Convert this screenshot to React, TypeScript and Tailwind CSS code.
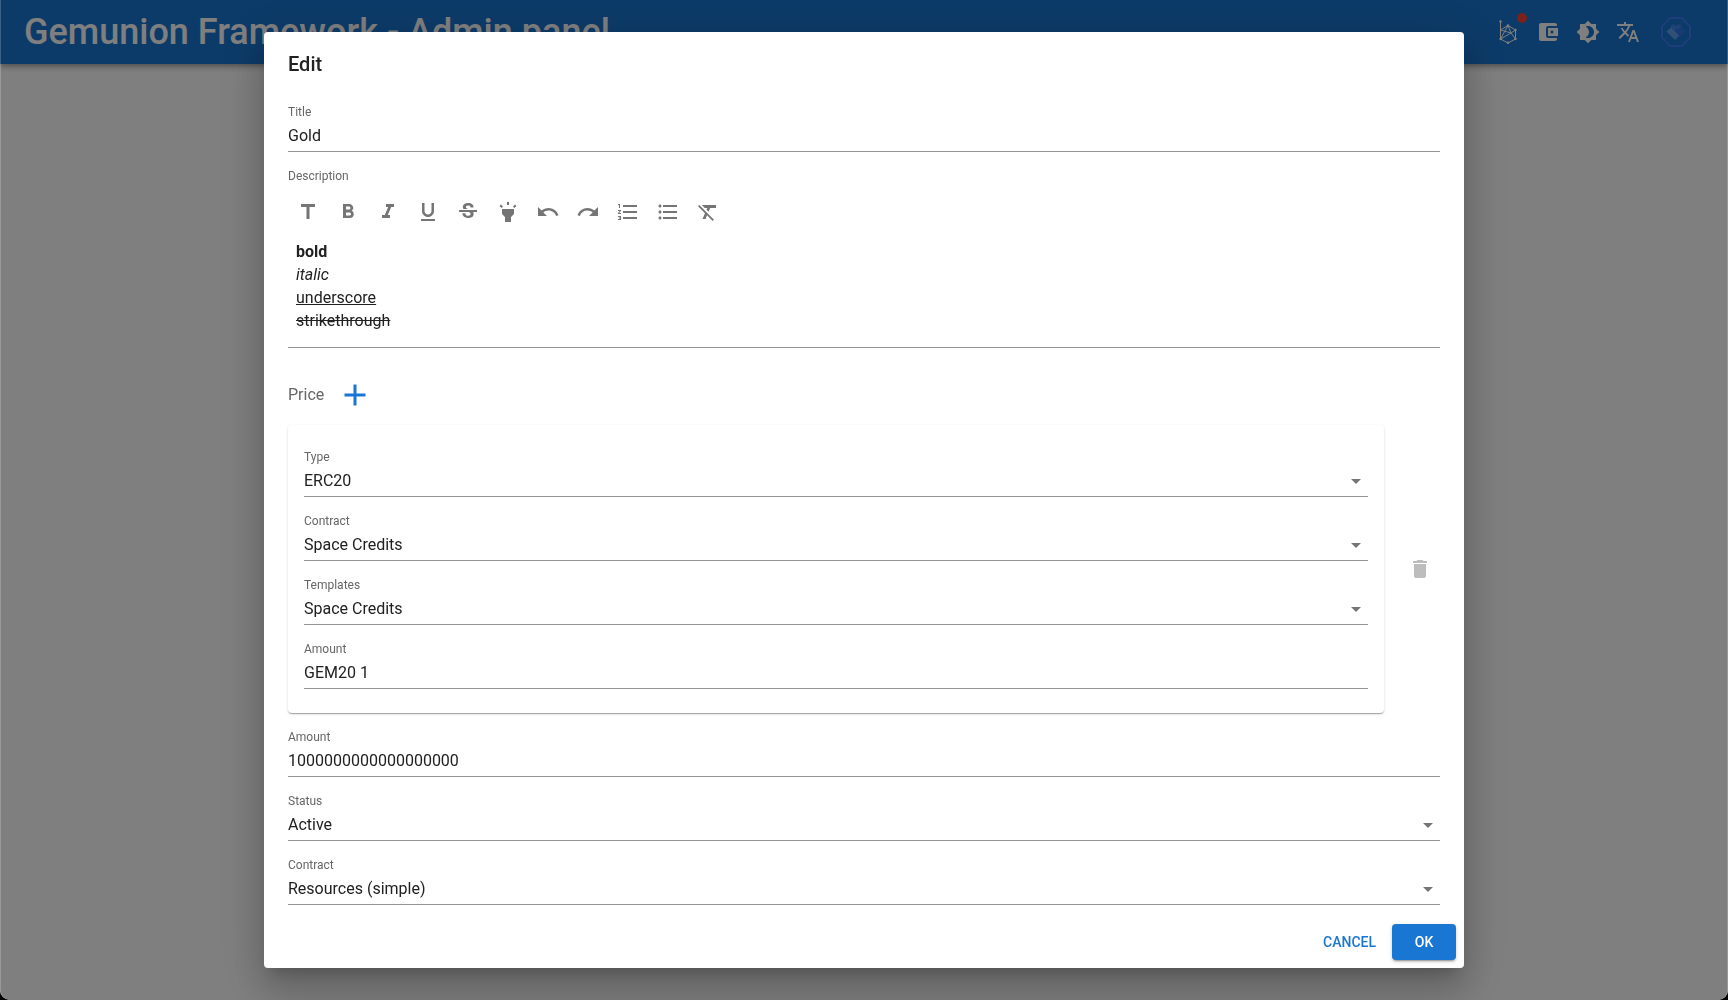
import { useState } from "react";
import type { ReactNode } from "react";
import {
  MdAccountBalanceWallet,
  MdAdd,
  MdArrowDropDown,
  MdBrightness4,
  MdDelete,
  MdFormatBold,
  MdFormatClear,
  MdFormatItalic,
  MdFormatListBulleted,
  MdFormatListNumbered,
  MdFormatUnderlined,
  MdHighlight,
  MdRedo,
  MdStrikethroughS,
  MdTitle,
  MdTranslate,
  MdUndo,
} from "react-icons/md";

function Field({ id, label, children }: { id: string; label: string; children: ReactNode }) {
  return (
    <div className="flex h-12 flex-col justify-between border-b border-[#949494]">
      <label htmlFor={id} className="text-xs leading-4 text-[#666666]">
        {label}
      </label>
      {children}
    </div>
  );
}

function TextField({ id, label, value }: { id: string; label: string; value: string }) {
  const [text, setText] = useState(value);
  return (
    <Field id={id} label={label}>
      <input
        id={id}
        value={text}
        onChange={(e) => setText(e.target.value)}
        className="h-8 w-full bg-transparent text-base text-[#212121] outline-none"
      />
    </Field>
  );
}

function SelectField({ id, label, options }: { id: string; label: string; options: string[] }) {
  return (
    <Field id={id} label={label}>
      <div className="relative">
        <select
          id={id}
          className="block h-8 w-full appearance-none bg-transparent pr-6 text-base text-[#212121] outline-none"
        >
          {options.map((o) => (
            <option key={o}>{o}</option>
          ))}
        </select>
        <MdArrowDropDown className="pointer-events-none absolute top-1 right-0 size-6 text-[#757575]" />
      </div>
    </Field>
  );
}

const tools = [
  { name: "Title", Icon: MdTitle },
  { name: "Bold", Icon: MdFormatBold },
  { name: "Italic", Icon: MdFormatItalic },
  { name: "Underline", Icon: MdFormatUnderlined },
  { name: "Strikethrough", Icon: MdStrikethroughS },
  { name: "Highlight", Icon: MdHighlight },
  { name: "Undo", Icon: MdUndo },
  { name: "Redo", Icon: MdRedo },
  { name: "Numbered list", Icon: MdFormatListNumbered },
  { name: "Bulleted list", Icon: MdFormatListBulleted },
  { name: "Clear format", Icon: MdFormatClear },
];

function BesuIcon() {
  return (
    <svg viewBox="0 0 24 24" className="size-6" fill="none" stroke="currentColor" strokeWidth="1">
      <path d="M4.500 1.500v17.500L12 23l7.500-4V10L12 5.500 4.500 10" />
      <path d="M12 5.500L4.500 19M12 5.500l3 7.500 4.500 6M4.500 19L15 13l4.500-3M4.500 10l10.500 3" />
      <g fill="currentColor" stroke="none">
        <circle cx="4.500" cy="1.500" r="1.200" />
        <circle cx="4.500" cy="19" r="1.200" />
        <circle cx="12" cy="5.500" r="1.200" />
        <circle cx="19.500" cy="10" r="1.200" />
        <circle cx="19.500" cy="19" r="1.200" />
        <circle cx="12" cy="22.800" r="1.200" />
      </g>
    </svg>
  );
}

function AvatarIcon() {
  return (
    <svg viewBox="0 0 32 32" className="size-8" fill="none">
      <path d="M10.200 2h11.600L30 10.200v11.600L21.800 30H10.200L2 21.800V10.200z" stroke="#3a7cf5" strokeWidth="2" />
      <path d="M11.500 8.500h3l1.500 2 1.500-2h3l1 3.500-5.500 5-5.500-5z" fill="#3f84f0" />
      <path d="M15 14l6-3 4.500 4.500L17 23l-3-4z" fill="#2f74e8" />
      <path d="M6.500 15.500l4.500-4 8 8-4 4.500z" fill="#62a0f0" />
    </svg>
  );
}

function Header() {
  return (
    <header className="flex h-16 items-center justify-between bg-[#1976d2] px-6 text-white shadow-[0_2px_4px_-1px_rgba(0,0,0,0.2),0_4px_5px_rgba(0,0,0,0.14),0_1px_10px_rgba(0,0,0,0.12)]">
      <h1 className="text-4xl font-medium">Gemunion Framework - Admin panel</h1>
      <div className="flex items-center">
        <button aria-label="Network" className="relative p-2">
          <BesuIcon />
          <span className="absolute top-px right-px size-2.5 rounded-full bg-[#f44336]" />
        </button>
        <button aria-label="Wallet" className="p-2">
          <MdAccountBalanceWallet className="size-6" />
        </button>
        <button aria-label="Theme" className="p-2">
          <MdBrightness4 className="size-6" />
        </button>
        <button aria-label="Language" className="p-2">
          <MdTranslate className="size-6" />
        </button>
        <button aria-label="Account" className="p-3">
          <AvatarIcon />
        </button>
      </div>
    </header>
  );
}

export default function App() {
  return (
    <div className="min-h-screen bg-black font-[Roboto,sans-serif]">
      <div className="min-h-screen overflow-hidden rounded-b-[10px] bg-white">
        <Header />
      </div>
      <div className="fixed inset-0 flex items-center justify-center rounded-b-[10px] border-x border-white/20 bg-black/50">
        <div
          role="dialog"
          aria-labelledby="dialog-title"
          className="mx-8 flex w-full max-w-[1200px] flex-col rounded bg-white text-[#212121] shadow-[0_11px_15px_-7px_rgba(0,0,0,0.2),0_24px_38px_3px_rgba(0,0,0,0.14),0_9px_46px_8px_rgba(0,0,0,0.12)]"
        >
          <h2 id="dialog-title" className="px-6 py-4 text-xl leading-8 font-medium">
            Edit
          </h2>
          <form className="flex flex-col gap-4 px-6 pt-2 pb-[11px]">
            <TextField id="title" label="Title" value="Gold" />

            <div className="border-b border-[#949494] pb-[15px]">
              <p id="description-label" className="mb-2 text-xs leading-4 text-[#666666]">
                Description
              </p>
              <div className="flex">
                {tools.map(({ name, Icon }) => (
                  <button key={name} type="button" aria-label={name} className="p-2 text-[#757575]">
                    <Icon className="size-6" />
                  </button>
                ))}
              </div>
              <div
                contentEditable
                suppressContentEditableWarning
                role="textbox"
                aria-labelledby="description-label"
                className="px-2 pt-2 text-base leading-[23px] outline-none"
              >
                <p className="font-bold">bold</p>
                <p className="italic">italic</p>
                <p className="underline">underscore</p>
                <p className="line-through">strikethrough</p>
              </div>
            </div>

            <section className="pt-[5px]">
              <div className="mb-1 flex items-center gap-[13px]">
                <h3 className="text-base text-[#666666]">Price</h3>
                <button type="button" aria-label="Add price" className="py-2 text-[#1976d2]">
                  <MdAdd className="size-9" />
                </button>
              </div>
              <div className="flex items-center gap-4">
                <div className="flex flex-1 flex-col gap-4 rounded px-4 py-6 shadow-[0_2px_1px_-1px_rgba(0,0,0,0.2),0_1px_1px_rgba(0,0,0,0.14),0_1px_3px_rgba(0,0,0,0.12)]">
                  <SelectField id="type" label="Type" options={["ERC20"]} />
                  <SelectField id="price-contract" label="Contract" options={["Space Credits"]} />
                  <SelectField id="templates" label="Templates" options={["Space Credits"]} />
                  <TextField id="price-amount" label="Amount" value="GEM20 1" />
                </div>
                <button type="button" disabled aria-label="Delete price" className="p-2 text-[#bdbdbd]">
                  <MdDelete className="size-6" />
                </button>
              </div>
            </section>

            <TextField id="amount" label="Amount" value="1000000000000000000" />
            <SelectField id="status" label="Status" options={["Active"]} />
            <SelectField id="contract" label="Contract" options={["Resources (simple)"]} />
          </form>
          <div className="flex justify-end gap-2 p-2 text-sm font-medium">
            <button type="button" className="h-9 px-2 text-[#1976d2]">
              CANCEL
            </button>
            <button
              type="button"
              className="h-9 w-16 rounded bg-[#1976d2] text-white shadow-[0_3px_1px_-2px_rgba(0,0,0,0.2),0_2px_2px_rgba(0,0,0,0.14),0_1px_5px_rgba(0,0,0,0.12)]"
            >
              OK
            </button>
          </div>
        </div>
      </div>
    </div>
  );
}
